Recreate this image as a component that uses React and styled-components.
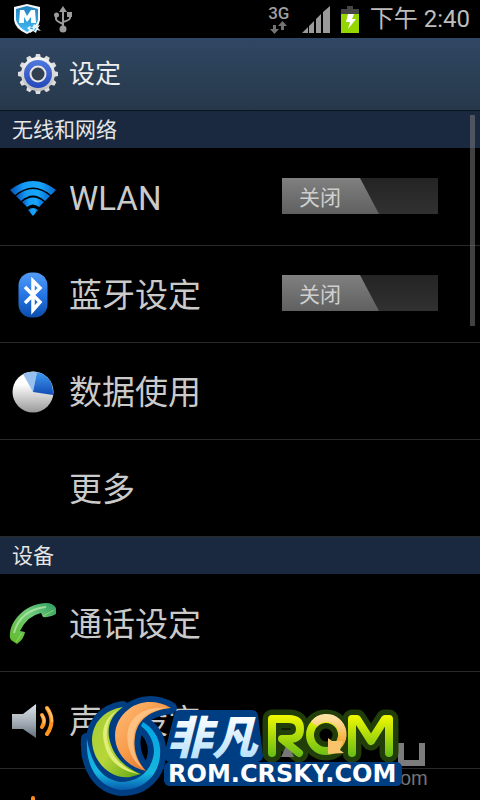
import React, { useState } from "react";
import styled, { createGlobalStyle } from "styled-components";

const GlobalStyle = createGlobalStyle`
  * { box-sizing: border-box; }
  body { margin: 0; background: #000; font-family: Roboto, "Noto Sans CJK SC", sans-serif; }
`;

const Screen = styled.div`
  position: relative;
  display: flex;
  flex-direction: column;
  height: 100vh;
  overflow: hidden;
  background: #000;
  color: #cacaca;
`;

const StatusBar = styled.div`
  display: flex;
  flex: none;
  align-items: center;
  justify-content: space-between;
  height: 38px;
  padding: 0 10px 0 12px;
`;

const StatusGroup = styled.div`
  display: flex;
  align-items: center;
  gap: ${(p) => p.$gap}px;
`;

const Clock = styled.time`
  font-size: 24px;
  line-height: 36px;
  color: #bdbdbd;
`;

const TitleBar = styled.header`
  display: flex;
  flex: none;
  align-items: center;
  gap: 10px;
  height: 73px;
  padding-left: 17px;
  background: linear-gradient(#304764, #2b4056 50%, #27384b);
  border-bottom: 1px solid #0b131d;
`;

const Title = styled.h1`
  margin: 0;
  font-size: 26px;
  line-height: 36px;
  font-weight: 400;
  color: #eee;
`;

const Content = styled.main`
  position: relative;
  flex: 1;
  min-height: 0;
  overflow: hidden;
`;

const SectionTitle = styled.h2`
  margin: 0;
  height: 38px;
  padding-left: 12px;
  background: #1a293f;
  border-bottom: 1px solid #000;
  font-size: 21px;
  line-height: 38px;
  font-weight: 400;
  color: #e6e6e6;
`;

const List = styled.ul`
  margin: 0;
  padding: 0;
  list-style: none;
`;

const Row = styled.li`
  display: flex;
  align-items: center;
  height: 97px;
  padding: 0 42px 2px 9px;
  border-bottom: 1px solid #292929;
`;

const RowLink = styled.a`
  display: flex;
  flex: 1;
  align-items: center;
  gap: 12px;
  padding-top: 4px;
  color: inherit;
  text-decoration: none;
`;

const RowLabel = styled.span`
  padding-top: 2px;
  font-size: 33px;
  line-height: 48px;
`;

const IconSlot = styled.span`
  display: flex;
  flex: none;
  align-items: center;
  justify-content: center;
  width: 48px;
  height: 48px;
`;

const Switch = styled.button`
  display: flex;
  width: 156px;
  height: 36px;
  padding: 0;
  border: 0;
  background: linear-gradient(#242424, #313131);
  justify-content: ${(p) => (p.$on ? "flex-end" : "flex-start")};
`;

const Thumb = styled.span`
  width: 97px;
  height: 36px;
  padding-left: 17px;
  background: linear-gradient(#808080, #606060);
  clip-path: polygon(0 0, 78px 0, 100% 100%, 0 100%);
  color: #cfcfcf;
  font-family: Roboto, "Noto Sans CJK SC", sans-serif;
  font-size: 21px;
  line-height: 40px;
  text-align: left;
`;

const ScrollThumb = styled.div`
  position: absolute;
  top: 4px;
  right: 5px;
  width: 5px;
  height: 211px;
  background: rgba(130, 130, 130, 0.5);
`;

const Watermark = styled.svg`
  position: absolute;
  left: 76px;
  bottom: 0;
  pointer-events: none;
`;

const ShieldIcon = () => (
  <svg width="30" height="32" viewBox="0 0 30 32" aria-hidden="true">
    <defs>
      <linearGradient id="shield" x2="0" y2="1"><stop stopColor="#2380c2" /><stop offset="1" stopColor="#40baf3" /></linearGradient>
    </defs>
    <path d="M15 1 28 4V17Q27 26 15 31Q3 26 2 17V4Z" fill="#f3f6f8" />
    <path d="M15 3 26 6V17Q24 24 15 29Q6 24 4 17V6Z" fill="url(#shield)" />
    <path d="M7 20 8 7h4l3 6 4-6h4l1 13h-5v-6l-4 5-3-5v6Z" fill="#fff" />
    <path d="m15 25 3-2 2 2 2-4 2 2 4-1-2 3 3 3-4-1-1 3-3-2-3 2-1-3Z" fill="#e9f4fa" />
    <path d="m18 25 3 1m1 2 2-3" stroke="#399bd0" />
  </svg>
);

const UsbIcon = () => (
  <svg width="18" height="27" viewBox="0 0 18 27" fill="#9b9b9b" stroke="#9b9b9b" aria-hidden="true">
    <path d="M9 22V4M2 10v3q0 2 7 5M16 9v3q0 2-7 4" fill="none" strokeWidth="2" />
    <path d="m9 0 4 6H5Z" stroke="none" />
    <circle cx="2.500" cy="9" r="2.500" stroke="none" />
    <path d="M13 6h5v5h-5Z" stroke="none" />
    <circle cx="9" cy="23" r="3.500" stroke="none" />
  </svg>
);

const NetworkBadge = styled.span`
  display: flex;
  flex-direction: column;
  align-items: center;
  width: 24px;
  font-size: 17px;
  line-height: 16px;
  font-weight: 500;
  color: #9f9f9f;
`;

const DataArrows = () => (
  <svg width="17" height="13" viewBox="0 0 17 13" fill="#737373" aria-hidden="true">
    <path d="M3 4h3v4h3l-4.500 5L0 8h3ZM11 9V5H8l4.500-5L17 5h-3v4Z" />
  </svg>
);

const SignalIcon = () => (
  <svg width="28" height="27" viewBox="0 0 28 27" aria-hidden="true">
    <path d="M0 27 6 21V27ZM7 20l5-5v12H7ZM14 13l5-5v19h-5ZM21 6l7-6v27h-7Z" fill="#9a9a9a" />
  </svg>
);

const BatteryIcon = () => (
  <svg width="18" height="27" viewBox="0 0 18 27" aria-hidden="true">
    <path d="M0 3h6V0h6v3h6v5H0Z" fill="#454545" />
    <path d="M0 8h18v19H0Z" fill="#96d600" />
    <path d="m7 8h6l-2 5h4L7 23l2-7H5Z" fill="#fff" />
  </svg>
);

const gearTeeth = Array.from({ length: 12 }, (_, i) => i * 30);

const GearIcon = () => (
  <svg width="42" height="42" viewBox="0 0 42 42" aria-hidden="true">
    <defs>
      <linearGradient id="gear" x2="0" y2="1"><stop stopColor="#f6f6f6" /><stop offset="1" stopColor="#bcbcbc" /></linearGradient>
      <linearGradient id="gearRing" x2="0" y2="1"><stop stopColor="#5079dd" /><stop offset="1" stopColor="#2448b9" /></linearGradient>
    </defs>
    <g fill="#dedede">
      {gearTeeth.map((a) => <path key={a} d="M17.500 7 19 1h4l1.500 6Z" transform={`rotate(${a} 21 21)`} />)}
    </g>
    <circle cx="21" cy="21" r="17" fill="url(#gear)" />
    <circle cx="21" cy="21" r="14" fill="url(#gearRing)" />
    <circle cx="21" cy="21" r="7.500" fill="#303f52" stroke="#e6e5e1" strokeWidth="2" />
  </svg>
);

const WifiIcon = () => (
  <svg width="48" height="38" viewBox="0 0 48 38" aria-hidden="true">
    <defs>
      <linearGradient id="wifi"><stop stopColor="#0750b4" /><stop offset=".3" stopColor="#139cf7" /><stop offset=".65" stopColor="#18a6fc" /><stop offset="1" stopColor="#0869cf" /></linearGradient>
    </defs>
    <g fill="url(#wifi)">
      <path d="M1 11Q24-7 47 11l-5 5Q24 1 6 16Z" />
      <path d="M7 17Q24 3 41 17l-5 5Q24 11 12 22Z" />
      <path d="M13 23q11-9 22 0l-5 5q-6-5-12 0Z" />
      <path d="M19 31q5-4 10 0l-5 6Z" />
    </g>
  </svg>
);

const BluetoothIcon = () => (
  <svg width="30" height="46" viewBox="0 0 30 46" aria-hidden="true">
    <defs>
      <linearGradient id="bt" x2="0" y2="1"><stop stopColor="#539bf8" /><stop offset=".5" stopColor="#2577e5" /><stop offset="1" stopColor="#0d4cad" /></linearGradient>
    </defs>
    <rect x=".5" y=".5" width="29" height="45" rx="13" fill="url(#bt)" />
    <path d="m7 15 15 15-7 8V9l7 7L7 31" fill="none" stroke="#fff" strokeWidth="3.500" />
  </svg>
);

const PieIcon = () => (
  <svg width="42" height="42" viewBox="0 0 42 42" aria-hidden="true">
    <defs>
      <linearGradient id="pie" x2="0" y2="1"><stop offset=".3" stopColor="#fff" /><stop offset="1" stopColor="#999" /></linearGradient>
      <linearGradient id="slice" x2="0" y2="1"><stop stopColor="#3e99f1" /><stop offset="1" stopColor="#124cb5" /></linearGradient>
    </defs>
    <circle cx="21" cy="21" r="20.500" fill="url(#pie)" />
    <path d="m21 21-10-18Q17 0 25 1Z" fill="#98c0ee" />
    <path d="m21 21 4-20Q42 5 41 24Z" fill="url(#slice)" />
  </svg>
);

const PhoneIcon = () => (
  <svg width="48" height="44" viewBox="0 0 48 44" aria-hidden="true">
    <defs>
      <linearGradient id="phone" x1="1" x2="0" y2="1"><stop stopColor="#2d9b62" /><stop offset=".4" stopColor="#70cb7c" /><stop offset="1" stopColor="#61b925" /></linearGradient>
    </defs>
    <path d="M1 31C3 15 20 1 37 1q7 0 10 5v6q-6 4-13 3l-2-4Q18 14 11 29l5 1q-1 7-8 12l-6-4Q0 35 1 31Z" fill="url(#phone)" />
    <path d="M5 31Q11 8 37 5" fill="none" stroke="#b7eba9" strokeWidth="2" opacity=".75" />
    <path d="m34 14 11-6M7 40l6-9" stroke="#a4e75a" opacity=".7" />
  </svg>
);

const SoundIcon = () => (
  <svg width="44" height="36" viewBox="0 0 44 36" aria-hidden="true">
    <defs>
      <linearGradient id="speaker" x2="0" y2="1"><stop stopColor="#dde3e8" /><stop offset=".6" stopColor="#9da6b0" /><stop offset="1" stopColor="#626d77" /></linearGradient>
    </defs>
    <path d="M1 11h11L25 1v34L12 26H1Z" fill="url(#speaker)" />
    <g fill="none" stroke="#ff941e" strokeLinecap="round">
      <path d="M31 12q4 6 0 12" strokeWidth="4" />
      <path d="M36 5q9 13 0 26" strokeWidth="4" />
      <path d="M36 5q5 6 5 13M31 12q3 4 2 8" stroke="#ffc076" strokeWidth="2" />
    </g>
  </svg>
);

const BrightnessIcon = () => (
  <svg width="48" height="44" viewBox="0 0 48 44" aria-hidden="true">
    <g fill="none" stroke="#ff8b22" strokeWidth="4" strokeLinecap="round">
      <path d="M24 2v8M24 34v8M4 22h8M36 22h8" />
      <circle cx="24" cy="22" r="7" fill="#ffb75a" />
    </g>
  </svg>
);

const ring = "M87 739C85 767 99 788 122 790C146 790 162 772 160 748C159 737 153 728 143 722L141 726C150 733 154 742 154 752C152 770 140 782 120 782C101 779 91 763 87 739Z";
const lime = "M123 707C104 710 92 723 92 741C93 764 113 780 130 777L141 774C122 766 112 754 109 737C107 724 113 714 123 707Z";
const orange = "M171 708C157 700 141 700 129 709C117 718 113 731 116 744C120 758 131 768 146 771C137 761 133 750 135 737C137 720 150 710 171 708Z";
const romR = "M272 753V719H289Q300 719 300 729Q300 739 289 739H282L299 753";
const romM = "M352 753V719H357L371 741L385 719H389V753";

const RomWatermark = () => (
  <Watermark width="360" height="108" viewBox="76 692 360 108" aria-label="非凡ROM ROM.CRSKY.COM">
    <defs>
      <linearGradient id="lime" x2="1" y2="1"><stop stopColor="#a5cc38" /><stop offset=".5" stopColor="#b7d638" /><stop offset="1" stopColor="#5ca416" /></linearGradient>
      <linearGradient id="orange" x2="1" y2="1"><stop stopColor="#ffbd78" /><stop offset=".45" stopColor="#f89c4b" /><stop offset="1" stopColor="#d45a17" /></linearGradient>
      <linearGradient id="cyan" x2="0" y2="1"><stop stopColor="#00a5e5" /><stop offset=".75" stopColor="#16b6de" /><stop offset="1" stopColor="#095aae" /></linearGradient>
      <linearGradient id="ice" x2="0" y2="1"><stop offset=".2" stopColor="#fff" /><stop offset="1" stopColor="#a8dbfb" /></linearGradient>
      <linearGradient id="green" gradientUnits="userSpaceOnUse" x1="0" y1="715" x2="0" y2="756"><stop stopColor="#f2f900" /><stop offset="1" stopColor="#68bd16" /></linearGradient>
      <linearGradient id="gold" x2="0" y2="1"><stop stopColor="#ffe0a1" /><stop offset="1" stopColor="#f5a72c" /></linearGradient>
    </defs>
    <path d="M401 743v20h21v-20" fill="none" stroke="#7c7c7c" strokeWidth="6" />
    <text x="400" y="785" fill="#747474" fontFamily="Liberation Sans" fontSize="20">om</text>
    <g fill="#003e83" stroke="#003e83" strokeWidth="12" strokeLinejoin="round">
      <path d={ring} /><path d={lime} /><path d={orange} />
      <path d="M180 716H252L257 756H170ZM170 768H396V780H170Z" />
    </g>
    <path d={ring} fill="url(#cyan)" />
    <path d={lime} fill="url(#lime)" />
    <path d="M118 710C105 717 101 730 104 742C108 761 120 771 139 774C120 767 109 753 107 738C106 726 110 716 118 710Z" fill="#e0ed76" />
    <path d={orange} fill="url(#orange)" />
    <path d="M168 708C147 706 132 714 128 730C125 746 132 761 144 770C134 757 132 747 134 735C136 720 148 710 168 708Z" fill="#ffd19a" opacity=".65" />
    <g fill="none" stroke="#213d09" strokeWidth="19" strokeLinecap="round" strokeLinejoin="round">
      <path d={romR} /><path d={romM} />
      <circle cx="326" cy="735" r="16" />
    </g>
    <text x="167" y="754" fill="url(#ice)" fontFamily="Noto Sans CJK SC" fontSize="45" fontWeight="900" fontStyle="italic">非凡</text>
    <path d="m281 757 5-11h3l5 11Z" fill="#777" />
    <g fill="none" stroke="url(#green)" strokeWidth="8" strokeLinecap="round" strokeLinejoin="round">
      <path d={romR} /><path d={romM} />
      <circle cx="326" cy="735" r="16" />
    </g>
    <path d="M314 724A16 16 0 0 1 339 744" fill="none" stroke="url(#gold)" strokeWidth="8" />
    <path d="m328 738 4 3h11l-3 9 4 3-16 1Z" fill="#f9c46c" />
    <path d="M170 768H396V780H170Z" fill="#003e83" stroke="#003e83" strokeWidth="12" strokeLinejoin="round" />
    <text x="168" y="782" fill="#fff" fontFamily="DejaVu Sans" fontSize="24" fontWeight="700">ROM.CRSKY.COM</text>
  </Watermark>
);

function SettingRow({ icon: Icon, label, toggle }) {
  const [on, setOn] = useState(false);
  return (
    <Row>
      <RowLink href="#">
        <IconSlot>{Icon && <Icon />}</IconSlot>
        <RowLabel>{label}</RowLabel>
      </RowLink>
      {toggle && (
        <Switch type="button" role="switch" aria-checked={on} aria-label={label} $on={on} onClick={() => setOn(!on)}>
          <Thumb>{on ? "开启" : "关闭"}</Thumb>
        </Switch>
      )}
    </Row>
  );
}

export default function App() {
  return (
    <Screen>
      <GlobalStyle />
      <StatusBar>
        <StatusGroup $gap={12}><ShieldIcon /><UsbIcon /></StatusGroup>
        <StatusGroup $gap={11}>
          <NetworkBadge>3G<DataArrows /></NetworkBadge>
          <SignalIcon />
          <BatteryIcon />
          <Clock>下午 2:40</Clock>
        </StatusGroup>
      </StatusBar>
      <TitleBar><GearIcon /><Title>设定</Title></TitleBar>
      <Content>
        <SectionTitle>无线和网络</SectionTitle>
        <List>
          <SettingRow icon={WifiIcon} label="WLAN" toggle />
          <SettingRow icon={BluetoothIcon} label="蓝牙设定" toggle />
          <SettingRow icon={PieIcon} label="数据使用" />
          <SettingRow label="更多" />
        </List>
        <SectionTitle>设备</SectionTitle>
        <List>
          <SettingRow icon={PhoneIcon} label="通话设定" />
          <SettingRow icon={SoundIcon} label="声音设定" />
          <SettingRow icon={BrightnessIcon} />
        </List>
        <ScrollThumb />
      </Content>
      <RomWatermark />
    </Screen>
  );
}
